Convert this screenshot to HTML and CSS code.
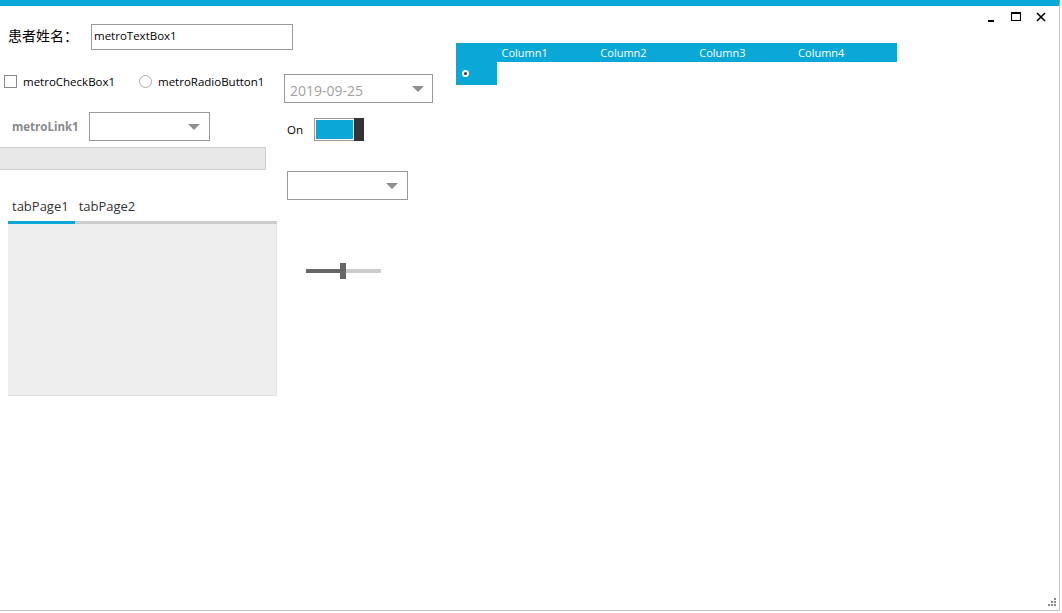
FILE: index.html
```html
<!DOCTYPE html>
<html>
<head>
<meta charset="utf-8">
<link rel="stylesheet" href="styles.css">
</head>
<body>
<div class="window">
  <div class="form">
    <div class="col-left">
      <div class="row-name">
        <span class="name-label">患者姓名：</span>
        <div class="textbox">metroTextBox1</div>
      </div>
      <div class="row-check">
        <span class="checkbox"></span>
        <span class="check-text">metroCheckBox1</span>
        <span class="radio"></span>
        <span class="radio-text">metroRadioButton1</span>
      </div>
      <div class="row-link">
        <span class="link">metroLink1</span>
        <div class="combo combo-a"><span class="arrow"></span></div>
      </div>
      <div class="progress"></div>
      <div class="tabs">
        <div class="tab-heads">
          <span class="tab-head">tabPage1</span>
          <span class="tab-head">tabPage2</span>
        </div>
        <div class="tab-line"><span class="tab-active"></span></div>
        <div class="tab-panel"></div>
      </div>
    </div>
    <div class="col-mid">
      <div class="datepicker"><span class="date-text">2019-09-25</span><span class="arrow"></span></div>
      <div class="row-toggle">
        <span class="on-text">On</span>
        <div class="toggle"><span class="toggle-fill"></span><span class="toggle-thumb"></span></div>
      </div>
      <div class="combo combo-b"><span class="arrow"></span></div>
      <div class="slider">
        <span class="slider-left"></span>
        <span class="slider-thumb"></span>
        <span class="slider-right"></span>
      </div>
    </div>
    <div class="col-right">
      <div class="grid">
        <div class="grid-head">
          <span class="corner"></span>
          <span class="col-title">Column1</span>
          <span class="col-title">Column2</span>
          <span class="col-title">Column3</span>
          <span class="col-title">Column4</span>
        </div>
        <div class="grid-row">
          <span class="row-header"><span class="row-mark"></span></span>
        </div>
      </div>
    </div>
  </div>
  <div class="controlbox">
    <span class="btn-min"></span>
    <span class="btn-max"></span>
    <svg class="btn-close" width="10" height="10" viewBox="0 0 10 10"><path d="M1 1 L9 9 M9 1 L1 9" stroke="#000" stroke-width="1.6" fill="none"/></svg>
  </div>
  <div class="grip">
    <span></span><span></span><span></span><span></span><span></span><span></span>
  </div>
</div>
</body>
</html>
```
FILE: styles.css
```css
html, body {
  margin: 0;
  padding: 0;
  background: #ffffff;
}
body {
  font-family: "Open Sans", "Noto Sans CJK SC", sans-serif;
  color: #000;
}
.window {
  position: relative;
  width: 1059px;
  height: 604px;
  border-top: 6px solid #0aa8d6;
  border-right: 1px solid #c8c8c8;
  border-bottom: 1px solid #c8c8c8;
  background: #fff;
}
.form {
  display: flex;
  align-items: flex-start;
}
.col-left {
  width: 284px;
  flex: none;
  display: flex;
  flex-direction: column;
}
.row-name {
  display: flex;
  align-items: center;
  margin-top: 18px;
  height: 26px;
  white-space: nowrap;
}
.name-label {
  flex: none;
  margin-left: 8px;
  margin-top: -4px;
  width: 83px;
  font-family: "Noto Sans CJK SC", sans-serif;
  font-size: 14px;
}
.textbox {
  flex: none;
  box-sizing: border-box;
  width: 202px;
  height: 26px;
  border: 1px solid #999;
  padding: 3px 0 0 2px;
  font-size: 11.5px;
  line-height: 16px;
}
.row-check {
  display: flex;
  align-items: center;
  margin-top: 24px;
  height: 14px;
  white-space: nowrap;
  font-size: 11.5px;
}
.checkbox {
  box-sizing: border-box;
  width: 13px;
  height: 13px;
  border: 1px solid #8a8a8a;
  margin-left: 4px;
}
.check-text {
  margin-left: 6px;
  width: 116px;
}
.radio {
  box-sizing: border-box;
  width: 13px;
  height: 13px;
  border: 1px solid #aaa;
  border-radius: 50%;
}
.radio-text {
  margin-left: 6px;
}
.row-link {
  display: flex;
  align-items: center;
  margin-top: 24px;
  height: 29px;
}
.link {
  margin-left: 12px;
  width: 77px;
  font-size: 11.5px;
  font-weight: bold;
  color: #8a8a8a;
}
.combo {
  box-sizing: border-box;
  position: relative;
  width: 121px;
  height: 29px;
  border: 1px solid #999;
  background: #fff;
}
.arrow {
  position: absolute;
  right: 9px;
  top: 11px;
  width: 0;
  height: 0;
  border-left: 6px solid transparent;
  border-right: 6px solid transparent;
  border-top: 6px solid #8f8f8f;
}
.progress {
  box-sizing: border-box;
  margin-top: 6px;
  width: 266px;
  height: 23px;
  background: #e8e8e8;
  border: 1px solid #cfcfcf;
  border-left: none;
}
.tabs {
  margin-top: 27px;
  margin-left: 8px;
  width: 269px;
}
.tab-heads {
  display: flex;
  height: 24px;
  align-items: flex-start;
  padding-top: 0;
  font-size: 13px;
  line-height: 18px;
  color: #333;
}
.tab-head {
  padding: 0 4px;
  margin-right: 2px;
}
.tab-line {
  height: 3px;
  background: #cccccc;
}
.tab-active {
  display: block;
  width: 67px;
  height: 3px;
  background: #0aa8d6;
}
.tab-panel {
  height: 171px;
  background: #eeeeee;
  border-bottom: 1px solid #e4e4e4;
  border-right: 1px solid #e4e4e4;
}
.col-mid {
  width: 172px;
  flex: none;
  display: flex;
  flex-direction: column;
}
.datepicker {
  box-sizing: border-box;
  position: relative;
  margin-top: 68px;
  width: 149px;
  height: 29px;
  border: 1px solid #999;
  padding: 4px 0 0 5px;
}
.date-text {
  font-size: 14px;
  color: #a0a0a0;
  line-height: 19px;
}
.datepicker .arrow {
  right: 8px;
  top: 11px;
}
.row-toggle {
  display: flex;
  align-items: center;
  margin-top: 15px;
  margin-left: 3px;
  height: 23px;
}
.on-text {
  font-size: 11.5px;
  width: 27px;
}
.toggle {
  box-sizing: border-box;
  display: flex;
  width: 50px;
  height: 23px;
  border: 1px solid #999;
  border-right: none;
  padding: 1px 0 1px 1px;
}
.toggle-fill {
  width: 37px;
  background: #0aa8d6;
  border-right: 1px solid #fff;
}
.toggle-thumb {
  width: 10px;
  margin-top: -2px;
  margin-bottom: -2px;
  background: #333333;
}
.combo-b {
  margin-top: 30px;
  margin-left: 3px;
}
.slider {
  display: flex;
  align-items: center;
  margin-top: 63px;
  margin-left: 22px;
  height: 16px;
}
.slider-left {
  width: 34px;
  height: 4px;
  background: #666;
}
.slider-thumb {
  width: 6px;
  height: 16px;
  background: #666;
}
.slider-right {
  width: 35px;
  height: 4px;
  background: #cccccc;
}
.col-right {
  flex: none;
}
.grid {
  margin-top: 37px;
}
.grid-head {
  display: flex;
  width: 441px;
  height: 19px;
  background: #0aa8d6;
  align-items: center;
}
.corner {
  width: 46px;
}
.col-title {
  width: 100px;
  font-size: 11px;
  color: #fff;
}
.grid-row {
  display: flex;
}
.row-header {
  display: flex;
  align-items: center;
  width: 41px;
  height: 23px;
  background: #0aa8d6;
}
.row-mark {
  box-sizing: border-box;
  margin-left: 6px;
  width: 7px;
  height: 7px;
  border-radius: 50%;
  background: #333;
  border: 2px solid #fff;
}
.controlbox {
  position: absolute;
  top: 5px;
  right: 13px;
  display: flex;
  align-items: center;
  height: 11px;
}
.btn-min {
  width: 6px;
  height: 2px;
  background: #000;
  margin-top: 9px;
}
.btn-max {
  box-sizing: border-box;
  margin-left: 17px;
  width: 10px;
  height: 9px;
  border: 1px solid #000;
  border-top-width: 2px;
}
.btn-close {
  margin-left: 15px;
  display: block;
}
.grip {
  position: absolute;
  right: 3px;
  bottom: 4px;
  width: 8px;
  height: 8px;
}
.grip span {
  position: absolute;
  width: 2px;
  height: 2px;
  background: #8a8a8a;
}
.grip span:nth-child(1) { right: 0; top: 0; }
.grip span:nth-child(2) { right: 0; top: 3px; }
.grip span:nth-child(3) { right: 3px; top: 3px; }
.grip span:nth-child(4) { right: 0; top: 6px; }
.grip span:nth-child(5) { right: 3px; top: 6px; }
.grip span:nth-child(6) { right: 6px; top: 6px; }
```
